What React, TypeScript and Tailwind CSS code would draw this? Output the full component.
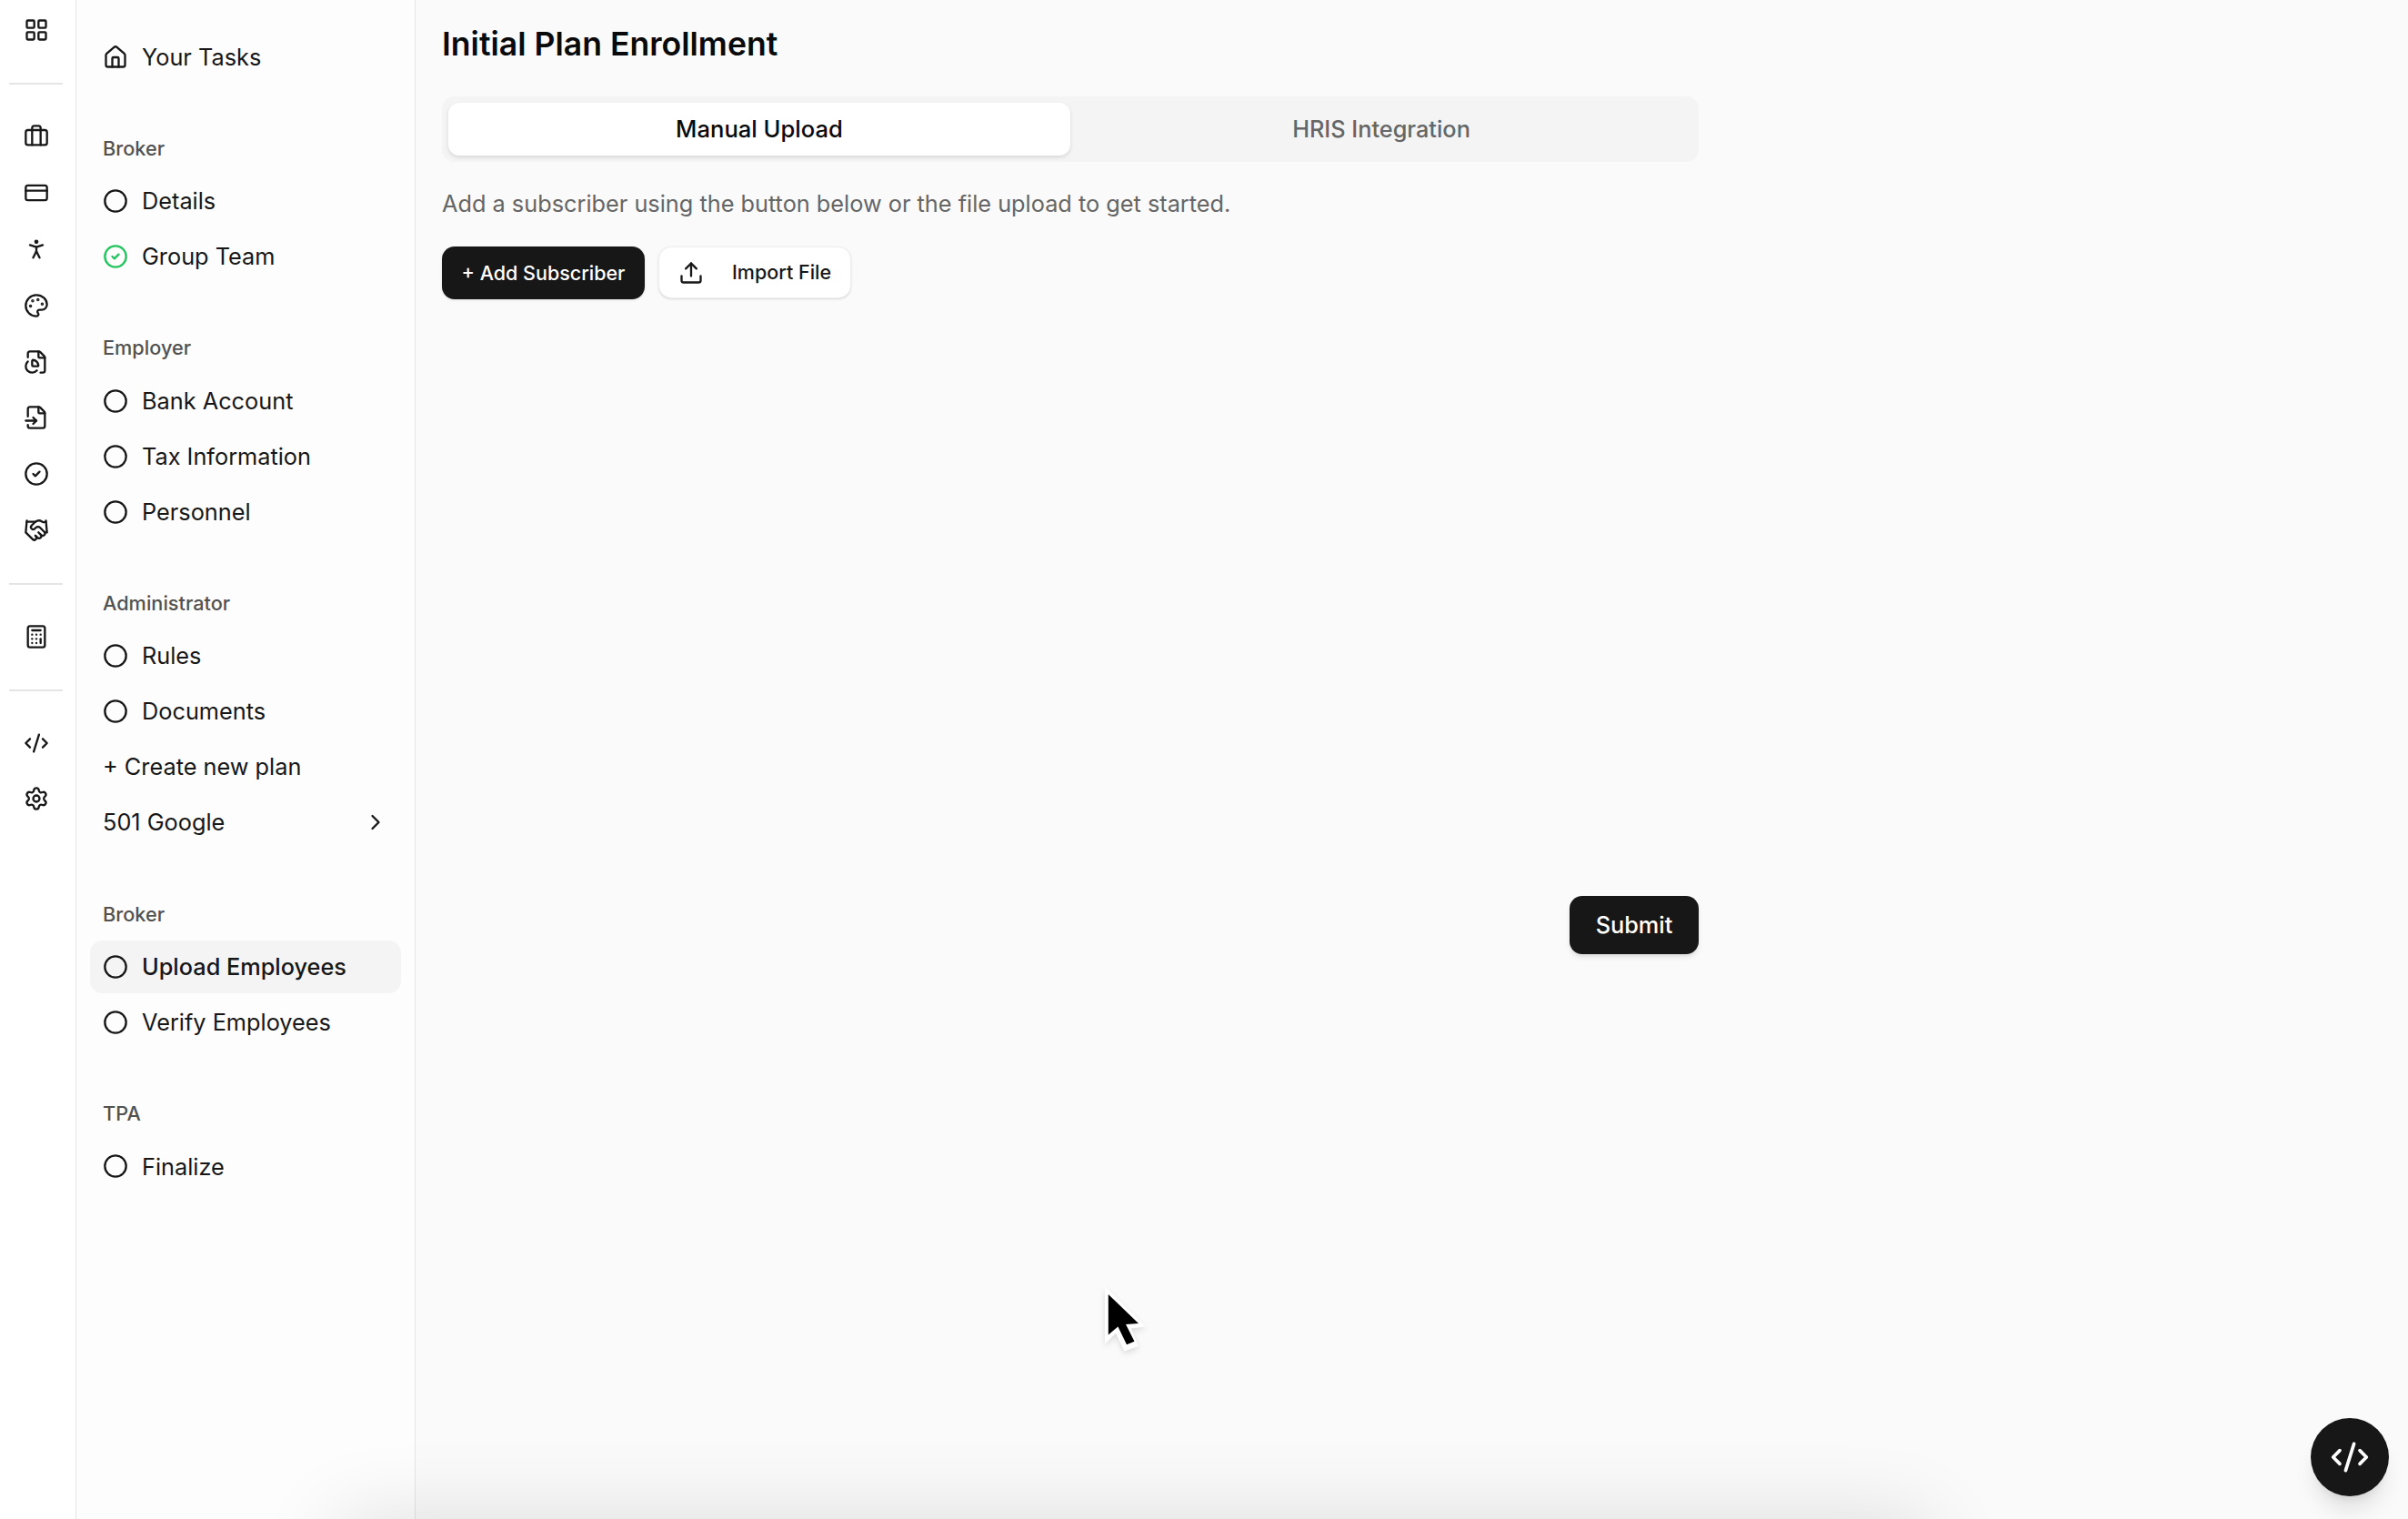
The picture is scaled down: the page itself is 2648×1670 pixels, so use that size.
import React from 'react';
import {
  LayoutGrid,
  Briefcase,
  CreditCard,
  PersonStanding,
  Palette,
  FileChartPie,
  FileInput,
  CircleCheck,
  Handshake,
  Calculator,
  CodeXml,
  Settings,
  House,
  Circle,
  ChevronRight,
  Upload,
} from 'lucide-react';

interface NavGroup {
  label: string;
  items: { name: string; done?: boolean; active?: boolean }[];
}

const groups: NavGroup[] = [
  { label: 'Broker', items: [{ name: 'Details' }, { name: 'Group Team', done: true }] },
  { label: 'Employer', items: [{ name: 'Bank Account' }, { name: 'Tax Information' }, { name: 'Personnel' }] },
  { label: 'Broker', items: [{ name: 'Upload Employees', active: true }, { name: 'Verify Employees' }] },
  { label: 'TPA', items: [{ name: 'Finalize' }] },
];

const railMain = [Briefcase, CreditCard, PersonStanding, Palette, FileChartPie, FileInput, CircleCheck, Handshake];

const RailIcon: React.FC<{ icon: React.ElementType }> = ({ icon: Icon }) => (
  <div className="flex h-[58px] w-full items-center justify-center">
    <Icon size={28} className="text-[#171717]" />
  </div>
);

const RailDivider = () => <div className="h-[2px] w-[59px] bg-[#e5e5e5]" />;

const NavItem: React.FC<{ name: string; done?: boolean; active?: boolean }> = ({ name, done, active }) => (
  <div className={`flex h-[58px] items-center gap-[15px] rounded-[14px] px-[14px] ${active ? 'bg-[#f4f4f4] font-medium' : ''}`}>
    {done ? (
      <CircleCheck size={28} className="shrink-0 text-[#22c55e]" />
    ) : (
      <Circle size={28} className="shrink-0 text-[#171717]" />
    )}
    <span>{name}</span>
  </div>
);

const GroupLabel: React.FC<{ text: string }> = ({ text }) => (
  <div className="mb-px flex h-[56px] items-center px-[14px] text-[21.7px] font-medium text-[#525252]">{text}</div>
);

const Group: React.FC<{ group: NavGroup }> = ({ group }) => (
  <div className="flex flex-col">
    <GroupLabel text={group.label} />
    <div className="flex flex-col gap-[3px]">
      {group.items.map((item) => (
        <NavItem key={item.name} {...item} />
      ))}
    </div>
  </div>
);

export default function App() {
  return (
    <div className="relative flex h-[1670px] w-[2648px] overflow-hidden bg-[#fafafa] font-['Inter',sans-serif] text-[25.3px] text-[#171717]">
      <aside className="flex w-[84px] shrink-0 flex-col items-center gap-[28.5px] border-r border-[#e5e5e5] bg-white pr-[4px] pt-[4px]">
        <RailIcon icon={LayoutGrid} />
        <RailDivider />
        <div className="flex w-full flex-col gap-[3.9px]">
          {railMain.map((Icon, i) => (
            <RailIcon key={i} icon={Icon} />
          ))}
        </div>
        <RailDivider />
        <RailIcon icon={Calculator} />
        <RailDivider />
        <div className="flex w-full flex-col gap-[3px]">
          <RailIcon icon={CodeXml} />
          <RailIcon icon={Settings} />
        </div>
      </aside>

      <nav className="flex w-[373px] shrink-0 flex-col gap-[43.6px] border-r border-[#e5e5e5] bg-[#fdfdfd] pl-[15px] pr-[15px] pt-[33.5px]">
        <div className="flex h-[58px] items-center gap-[15px] px-[14px]">
          <House size={28} className="shrink-0" />
          <span>Your Tasks</span>
        </div>
        <Group group={groups[0]} />
        <Group group={groups[1]} />
        <div className="flex flex-col">
          <GroupLabel text="Administrator" />
          <div className="flex flex-col gap-[3px]">
            <NavItem name="Rules" />
            <NavItem name="Documents" />
            <div className="flex h-[58px] items-center px-[14px]">+ Create new plan</div>
            <div className="flex h-[58px] items-center justify-between px-[14px]">
              <span>501 Google</span>
              <ChevronRight size={28} />
            </div>
          </div>
        </div>
        <Group group={groups[2]} />
        <Group group={groups[3]} />
      </nav>

      <main className="flex-1 pl-[29px] pt-[25px]">
        <div className="w-[1382px]">
          <h1 className="h-[48px] text-[35.6px] font-semibold leading-[48px] text-[#0a0a0a]">Initial Plan Enrollment</h1>

          <div className="mt-[33px] grid h-[72px] grid-cols-2 rounded-[14px] bg-[#f4f4f4] p-[7px]">
            <div className="flex items-center justify-center rounded-[12px] bg-white text-[25.6px] font-medium text-[#0a0a0a] shadow-[0_2px_4px_rgba(0,0,0,0.12)]">
              Manual Upload
            </div>
            <div className="flex items-center justify-center font-medium text-[#666666]">HRIS Integration</div>
          </div>

          <p className="mt-[30px] h-[32px] leading-[32px] text-[#666666]">
            Add a subscriber using the button below or the file upload to get started.
          </p>

          <div className="mt-[31px] flex gap-[15px]">
            <button className="h-[58px] w-[223px] rounded-[14px] bg-[#171717] text-[21.5px] font-medium text-white shadow-sm">
              + Add Subscriber
            </button>
            <button className="flex h-[57px] w-[212px] items-center gap-[31px] rounded-[14px] border border-[#eeeeee] bg-white pl-[21px] text-[21.5px] font-medium text-[#171717] shadow-sm">
              <Upload size={28} className="shrink-0" />
              Import File
            </button>
          </div>

          <div className="mt-[656px] flex justify-end">
            <button className="h-[64px] w-[142px] rounded-[14px] bg-[#171717] font-medium text-white shadow-md">Submit</button>
          </div>
        </div>
      </main>

      {/* shadow of something sitting just under the fold */}
      <div className="absolute left-[370px] top-[1670px] h-[100px] w-[1750px] shadow-[0_0_90px_rgba(0,0,0,0.12)]" />

      <svg className="absolute left-[1215px] top-[1414px] drop-shadow-md" width="46" height="74" viewBox="0 0 46 74">
        <polygon points="0,0 44.5,44.6 28.7,46.4 36.8,66 21.5,71.4 12,51.8 0,63.6" fill="#ffffff" />
        <polygon points="3.8,9 37,41 23,42 32.5,60.7 24,64.3 14.4,44.6 3.8,53.6" fill="#000000" />
      </svg>

      <button className="absolute left-[2541px] top-[1559px] flex h-[86px] w-[86px] items-center justify-center rounded-full bg-[#171717] text-white shadow-xl">
        <CodeXml size={44} />
      </button>
    </div>
  );
}
